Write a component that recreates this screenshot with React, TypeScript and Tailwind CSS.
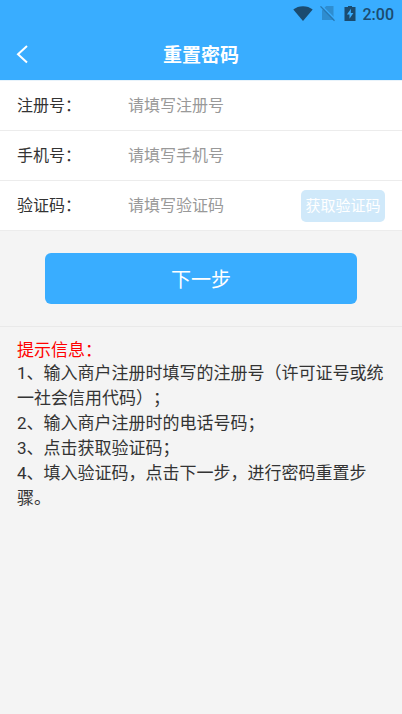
import React, { useState } from 'react'

const fields = [
  { id: 'regNo', label: '注册号：', placeholder: '请填写注册号' },
  { id: 'phone', label: '手机号：', placeholder: '请填写手机号' },
  { id: 'code', label: '验证码：', placeholder: '请填写验证码' },
]

const tips = [
  '1、输入商户注册时填写的注册号（许可证号或统一社会信用代码）；',
  '2、输入商户注册时的电话号码；',
  '3、点击获取验证码；',
  '4、填入验证码，点击下一步，进行密码重置步骤。',
]

const StatusBar: React.FC = () => (
  <div className="flex h-7 items-center justify-end pr-2 text-[#1b4b6f]">
    <svg className="mr-[7px] h-4 w-5" viewBox="0 0 20 16" fill="currentColor">
      <path d="M0.3 3.6C3 1.4 6.2 0.2 10 0.2s7 1.2 9.7 3.4L10 15z" />
    </svg>
    <svg className="mr-2 h-4 w-4" viewBox="0 0 16 16">
      <path d="M6.2 0H13.5v14H2V4.2z" fill="#2e8dd0" />
      <path d="M1.4 -0.4l14 14" stroke="#39adff" strokeWidth="1.4" />
      <path d="M0.5 0.4l14 14.3" stroke="#2878b3" strokeWidth="1.3" />
    </svg>
    <svg className="mr-[7px] h-4 w-3" viewBox="0 0 12 16">
      <path d="M4 -0.5h4V1h3.5v14H0.5V1H4z" fill="currentColor" />
      <path d="M7 2.8L2.9 8.4h2.6v4.4l3.9-5.7H6.8z" fill="#39adff" />
    </svg>
    <span className="pt-px font-[Roboto,sans-serif] text-base font-medium">2:00</span>
  </div>
)

export default function App() {
  const [values, setValues] = useState<Record<string, string>>({})

  return (
    <div className="min-h-screen bg-[#f4f4f4] font-[Roboto,'Noto_Sans_CJK_SC',sans-serif] text-[#333] [text-spacing-trim:space-all]">
      <header className="bg-[#39adff] text-white">
        <StatusBar />
        <div className="grid h-[52px] grid-cols-[48px_1fr_48px] items-center">
          <button type="button" aria-label="返回" className="flex h-full items-center pl-4">
            <svg className="h-5 w-3" viewBox="0 0 12 20" fill="none" stroke="currentColor" strokeWidth="2">
              <path d="M11 2L2 10.2l9 8.3" />
            </svg>
          </button>
          <h1 className="pt-1 text-center text-[19px] font-bold">重置密码</h1>
        </div>
      </header>

      <form onSubmit={e => e.preventDefault()}>
        <div className="border-t border-[#e8f3fb] bg-white">
          {fields.map(f => (
            <div key={f.id} className="flex h-[50px] items-center border-b border-[#ececec] px-[17px]">
              <label htmlFor={f.id} className="w-[111px] shrink-0 text-base">{f.label}</label>
              <input
                id={f.id}
                className="min-w-0 flex-1 bg-transparent text-base outline-none placeholder:text-[#999]"
                placeholder={f.placeholder}
                value={values[f.id] || ''}
                onChange={e => setValues({ ...values, [f.id]: e.target.value })}
              />
              {f.id === 'code' && (
                <button type="button" className="h-8 w-[84px] shrink-0 rounded-[5px] bg-[#d0e9fa] pt-[2px] text-[15px] whitespace-nowrap text-white">获取验证码</button>
              )}
            </div>
          ))}
        </div>
        <div className="border-b border-[#e9e9e9] px-[45px] pt-[22px] pb-[22px]">
          <button type="submit" className="h-[51px] w-full rounded-md bg-[#39adff] pt-[2px] text-xl text-white">下一步</button>
        </div>
      </form>

      <section className="px-[17px] pt-3 text-[17px] leading-[25px]">
        <h2 className="leading-[22px] text-[#f00]">提示信息：</h2>
        {tips.map(t => <p key={t}>{t}</p>)}
      </section>
    </div>
  )
}
